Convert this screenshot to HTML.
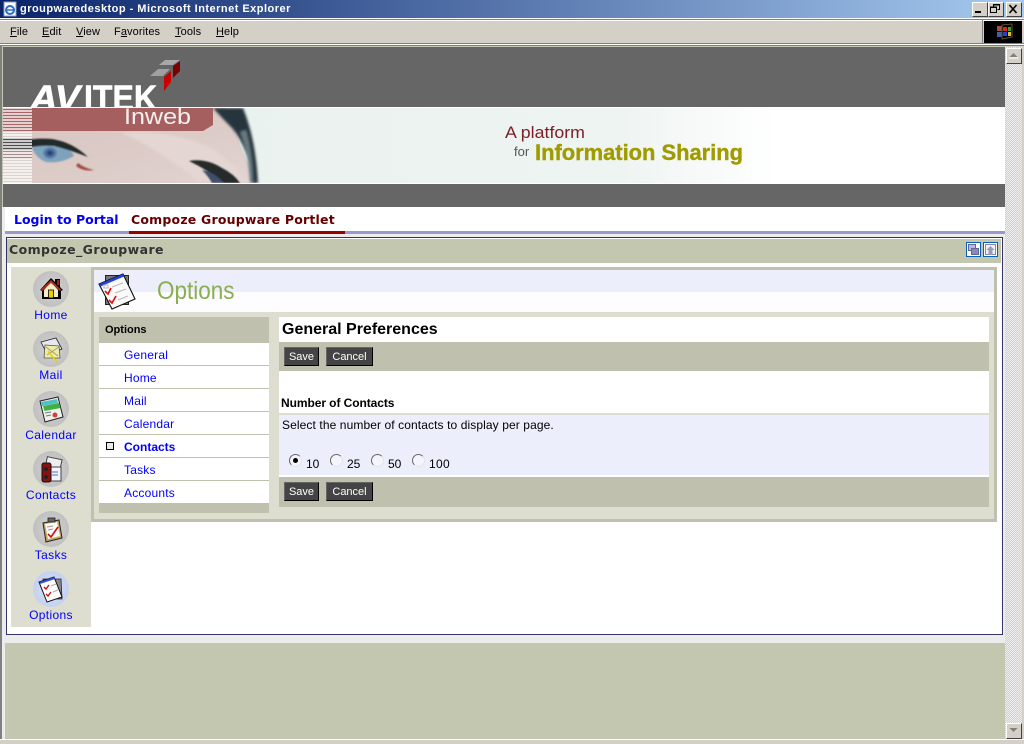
<!DOCTYPE html>
<html>
<head>
<meta charset="utf-8">
<title>groupwaredesktop - Microsoft Internet Explorer</title>
<style>
html,body{margin:0;padding:0;width:1024px;height:744px;overflow:hidden;background:#d4d0c8;font-family:"Liberation Sans",sans-serif}
.a{position:absolute}
.t{position:absolute;white-space:nowrap}
.menu{top:24px;font-size:11px;color:#000;line-height:16px;letter-spacing:.1px}
.menu u{text-decoration:underline}
.nav{font-size:12px;color:#0000ff;width:80px;left:11px;text-align:center;line-height:14px;letter-spacing:.35px}
.side{left:124px;font-size:12px;color:#0000ff;line-height:14px;letter-spacing:.2px}
.sep{left:99px;width:170px;height:1px;background:#bfc0ae}
.btn{position:absolute;background:#444;color:#fff;font-size:11px;height:17px;line-height:18px;text-align:center;border-top:1px solid #666;border-left:1px solid #666;border-right:1px solid #000;border-bottom:1px solid #000;box-sizing:content-box}
.circle{position:absolute;left:33px;width:36px;height:36px;border-radius:50%;background:radial-gradient(circle at 50% 50%,#d4d4d4 0,#c0c0c0 72%,#909090 100%)}
.radio{position:absolute;width:11px;height:11px;border-radius:50%;background:#f4f4fc;border:1px solid;border-color:#666 #e4e4e4 #e4e4e4 #666}
</style>
</head>
<body>
<!-- title bar -->
<div class="a" style="left:0;top:0;width:1024px;height:18px;background:linear-gradient(90deg,#0a246a,#a6caf0)"></div>
<svg class="a" style="left:2px;top:1px" width="16" height="16" viewBox="0 0 16 16"><rect x="2" y="1" width="12" height="14" fill="#fff" stroke="#8898b8"/><circle cx="8" cy="9" r="4" fill="none" stroke="#2a6cc8" stroke-width="2"/><path d="M4 9h8" stroke="#2a6cc8" stroke-width="1.5"/></svg>
<div class="t" style="left:20px;top:1px;font-size:11px;font-weight:bold;color:#fff;line-height:16px;letter-spacing:.48px">groupwaredesktop - Microsoft Internet Explorer</div>
<div class="a" style="left:972px;top:2px;width:14px;height:13px;background:#d4d0c8;border:1px solid;border-color:#fff #404040 #404040 #fff"></div>
<div class="a" style="left:975px;top:11px;width:6px;height:2px;background:#000"></div>
<div class="a" style="left:988px;top:2px;width:14px;height:13px;background:#d4d0c8;border:1px solid;border-color:#fff #404040 #404040 #fff"></div>
<svg class="a" style="left:990px;top:4px" width="11" height="10"><path d="M3.5 2.5V.5h6v5H7.5M.5 3.5h6v5h-6z" fill="none" stroke="#000"/><path d="M3 1h7M0 3h7" stroke="#000"/></svg>
<div class="a" style="left:1006px;top:2px;width:14px;height:13px;background:#d4d0c8;border:1px solid;border-color:#fff #404040 #404040 #fff"></div>
<svg class="a" style="left:1008px;top:4px" width="11" height="10"><path d="M1.5 1l7 8M8.5 1l-7 8" stroke="#000" stroke-width="1.6"/></svg>

<!-- menu -->
<div class="a" style="left:0;top:18px;width:1024px;height:2px;background:#fff"></div>
<div class="a" style="left:0;top:19px;width:1024px;height:1px;background:#808080"></div>
<div class="a" style="left:0;top:20px;width:1024px;height:1px;background:#fff"></div>
<div class="a" style="left:0;top:43px;width:1024px;height:1px;background:#808080"></div>
<div class="a" style="left:0;top:44px;width:1024px;height:1px;background:#fff"></div>
<div class="a" style="left:0;top:45px;width:1024px;height:1px;background:#808080"></div>
<div class="t menu" style="left:10px"><u>F</u>ile</div>
<div class="t menu" style="left:42px"><u>E</u>dit</div>
<div class="t menu" style="left:76px"><u>V</u>iew</div>
<div class="t menu" style="left:114px">F<u>a</u>vorites</div>
<div class="t menu" style="left:175px"><u>T</u>ools</div>
<div class="t menu" style="left:216px"><u>H</u>elp</div>
<div class="a" style="left:982px;top:20px;width:1px;height:23px;background:#808080"></div>
<div class="a" style="left:984px;top:21px;width:38px;height:22px;background:#000"></div>
<svg class="a" style="left:995px;top:23px" width="20" height="18"><rect x="2" y="3" width="5" height="5" fill="#a85040"/><rect x="2" y="9" width="5" height="5" fill="#4060a0"/><rect x="8" y="4" width="4" height="4" fill="#e02020"/><rect x="13" y="4" width="3" height="4" fill="#30a030"/><rect x="8" y="9" width="4" height="4" fill="#2040e0"/><rect x="13" y="9" width="3" height="4" fill="#e0c020"/><path d="M7 2l10-1v13l-10 2z" fill="none" stroke="#605030"/></svg>

<!-- content frame -->
<div class="a" style="left:0;top:46px;width:1005px;height:694px;background:#ececec"></div>
<div class="a" style="left:0;top:46px;width:2px;height:694px;background:#808080"></div>
<div class="a" style="left:2px;top:46px;width:1px;height:161px;background:#c4c7b0"></div>
<div class="a" style="left:2px;top:46px;width:1003px;height:1px;background:#c4c7b0"></div>

<!-- banner: coordinates below are page coordinates -->
<svg class="a" style="left:3px;top:47px" width="1002" height="160" viewBox="3 47 1002 160">
 <defs>
  <linearGradient id="fade" x1="0" x2="1"><stop offset="0" stop-color="#e8f0ee"/><stop offset=".8" stop-color="#eef4f2"/><stop offset="1" stop-color="#fff"/></linearGradient>
  <linearGradient id="skin" x1="0" x2="1" y1="0" y2="1"><stop offset="0" stop-color="#d6c4c0"/><stop offset=".55" stop-color="#dccbc7"/><stop offset="1" stop-color="#e2d4d1"/></linearGradient>
  <radialGradient id="iris"><stop offset="0" stop-color="#1c2c5c"/><stop offset=".3" stop-color="#38588a"/><stop offset="1" stop-color="#8cb0ca"/></radialGradient>
  <clipPath id="bn"><rect x="3" y="108" width="1002" height="75"/></clipPath>
  <filter id="soft" x="-5%" y="-5%" width="110%" height="110%"><feGaussianBlur stdDeviation=".8"/></filter>
  <filter id="soft2" x="-5%" y="-5%" width="110%" height="110%"><feGaussianBlur stdDeviation="1.4"/></filter>
 </defs>
 <rect x="3" y="47" width="1002" height="160" fill="#666"/>
 <text x="30" y="110" font-family="Liberation Sans,sans-serif" font-weight="bold" font-style="italic" font-size="35" fill="#fff" stroke="#fff" stroke-width=".6" textLength="50" lengthAdjust="spacingAndGlyphs">AV</text>
 <text x="84" y="110" font-family="Liberation Sans,sans-serif" font-weight="bold" font-size="35" fill="#fff" stroke="#fff" stroke-width=".6" textLength="73" lengthAdjust="spacingAndGlyphs">ITEK</text>
 <rect x="3" y="107" width="1002" height="77" fill="#fff"/>
 <g clip-path="url(#bn)">
  <rect x="3" y="108" width="772" height="75" fill="url(#fade)"/>
  <path d="M3 108H225L256 183H3z" fill="url(#skin)"/>
  <g filter="url(#soft2)">
   <path d="M213 108H243Q256 140 258 183H251Q250 150 232 128 222 118 213 108z" fill="#28363c"/>
   <path d="M246 130Q253 155 253 183H250Q248 150 240 132z" fill="#667a80"/>
   <path d="M120 132Q180 130 215 150 235 165 248 183H200Q160 150 120 132z" fill="#e4d6d2"/>
  </g>
  <g filter="url(#soft)">
   <path d="M32 148Q50 140 62 146 72 150 74 156 60 164 46 162 36 158 32 148z" fill="#7fa2bc"/>
   <ellipse cx="50" cy="153" rx="9" ry="7.500" fill="url(#iris)"/>
   <path d="M3 146Q26 137 52 139 72 142 88 157 70 150 54 146 30 144 3 156z" fill="#23292c"/>
   <path d="M78 163Q84 168 94 170 84 172 76 166z" fill="#a04c42"/>
   <path d="M189 161Q206 158 222 168 234 174 240 183H224Q208 170 189 161z" fill="#25292c"/>
   <path d="M202 170Q214 172 224 183H212Q208 176 202 170z" fill="#40506c"/>
  </g>
  <path d="M32 108H213V125L203 131H32z" fill="#a55f5f"/>
  <path d="M3 108h29v75H3z" fill="#f8f4f2"/>
  <path d="M3 109.500h29M3 112.500h29M3 115.500h29M3 118.500h29M3 121.500h29M3 124.500h29M3 127.500h29M3 130.500h29" stroke="#a66668" stroke-width="1.400"/>
  <path d="M3 133.500h29M3 136.500h29" stroke="#d8d0d0" stroke-width="1.200"/>
  <path d="M3 139.500h29M3 142.500h29M3 145.500h29M3 148.500h29" stroke="#4c4e52" stroke-width="1.400"/>
  <path d="M3 151.500h29M3 154.500h29M3 157.500h29" stroke="#a48c8c" stroke-width="1.300"/>
  <path d="M3 160.500h29M3 163.500h29M3 166.500h29M3 169.500h29M3 172.500h29M3 175.500h29M3 178.500h29M3 181.500h29" stroke="#dcd2d0" stroke-width="1.300"/>
 </g>
 <!-- logo cubes -->
 <path d="M165 60H180L173 65H159z" fill="#a8a8a8"/>
 <path d="M158 69H170L163 76H150z" fill="#a0a0a0"/>
 <path d="M173 66L180 61V71L173 78z" fill="#7c0000"/>
 <path d="M164 77L171 71V82L164 91z" fill="#c80000"/>
 <text x="124" y="124" font-family="Liberation Sans,sans-serif" font-size="22" fill="#f6f0f0" textLength="67" lengthAdjust="spacingAndGlyphs">Inweb</text>
 <text x="505" y="138" font-family="Liberation Sans,sans-serif" font-size="17" fill="#7c2028" textLength="80" lengthAdjust="spacingAndGlyphs">A platform</text>
 <text x="514" y="156" font-family="Liberation Sans,sans-serif" font-size="13" fill="#555">for</text>
 <text x="535" y="160" font-family="Liberation Sans,sans-serif" font-weight="bold" font-size="22" fill="#a09c00" stroke="#a09c00" stroke-width=".4" textLength="208" lengthAdjust="spacingAndGlyphs">Information Sharing</text>
</svg>

<!-- tabs -->
<div class="a" style="left:2px;top:207px;width:1003px;height:24px;background:#fff"></div>
<div class="a" style="left:2px;top:231px;width:127px;height:3px;background:#9999cc"></div>
<div class="a" style="left:129px;top:231px;width:216px;height:3px;background:#990000"></div>
<div class="a" style="left:345px;top:231px;width:660px;height:3px;background:#9999cc"></div>
<div class="t" style="left:14px;top:212px;font-family:'DejaVu Sans',sans-serif;font-size:12.500px;font-weight:bold;color:#0000ee;line-height:16px">Login to Portal</div>
<div class="t" style="left:131px;top:212px;font-family:'DejaVu Sans',sans-serif;font-size:12.500px;font-weight:bold;color:#660000;line-height:16px;letter-spacing:.2px">Compoze Groupware Portlet</div>

<!-- portlet -->
<div class="a" style="left:6px;top:237px;width:995px;height:396px;background:#fff;border:1px solid #333366"></div>
<div class="a" style="left:7px;top:239px;width:994px;height:24px;background:#c4c7b0"></div>
<div class="t" style="left:9px;top:242px;font-family:'DejaVu Sans',sans-serif;font-size:12.500px;font-weight:bold;color:#333;line-height:16px;letter-spacing:.42px">Compoze_Groupware</div>
<svg class="a" style="left:966px;top:242px" width="33" height="16"><rect x=".5" y=".5" width="14" height="14" fill="#fff" stroke="#0a62b8"/><rect x="2.500" y="2.500" width="7" height="6" fill="#b8b8dc" stroke="#666699"/><rect x="5.500" y="6.500" width="7" height="6" fill="#8888bb" stroke="#666699"/><rect x="17.500" y=".5" width="14" height="14" fill="#fff" stroke="#0a62b8"/><rect x="19.500" y="2.500" width="10" height="10" fill="#f0f0f8" stroke="#8888aa"/><path d="M24.500 4l4 4h-2v5h-4V8h-2z" fill="#9999bb"/></svg>

<!-- left nav -->
<div class="a" style="left:11px;top:267px;width:80px;height:360px;background:#dddecf"></div>
<div class="circle" style="top:271px"></div>
<div class="circle" style="top:331px"></div>
<div class="circle" style="top:391px"></div>
<div class="circle" style="top:451px"></div>
<div class="circle" style="top:511px"></div>
<div class="circle" style="top:571px;background:radial-gradient(circle,#dce4fa 0,#c4d0f0 72%,#969cbc 100%)"></div>
<svg class="a" style="left:33px;top:271px" width="36" height="36"><path d="M7 19L18 7l4 4V8h5v8l3 3-2 1v8H9v-8z" fill="#000"/><rect x="24" y="9" width="2.500" height="5" fill="#a02020"/><path d="M11 19l7-8 7 8v7H11z" fill="#f6eccc"/><path d="M18 9L7.500 19l2 .8L18 12l8.500 7.800 2-.8z" fill="#b03020"/><rect x="15.500" y="19" width="5" height="8" fill="#e8d000" stroke="#000" stroke-width=".8"/></svg>
<svg class="a" style="left:33px;top:331px" width="36" height="36"><path d="M8 11l15-4 6 11-15 5z" fill="#e8e8f0" stroke="#222" stroke-width=".8"/><path d="M12 14l14 1 1 12-16 0z" fill="#f0eca0" stroke="#555" stroke-width=".8"/><path d="M13 16l12 9M26 16l-12 8" stroke="#999"/><path d="M15 20l9 11" stroke="#e8d000" stroke-width="1.500"/></svg>
<svg class="a" style="left:33px;top:391px" width="36" height="36"><path d="M7 10l18-4 5 20-18 5z" fill="#eef0ea" stroke="#222"/><path d="M8 11l16-3 1 4-16 3z" fill="#50c0c8"/><path d="M10 15l16-3 1.500 5-16 3z" fill="#40b040"/><circle cx="22" cy="24" r="2.500" fill="#d04040"/><path d="M12 22l6-1M13 25l5-1" stroke="#777"/></svg>
<svg class="a" style="left:33px;top:451px" width="36" height="36"><rect x="13" y="7" width="15" height="13" fill="#eee" stroke="#444" transform="rotate(12 20 13)"/><rect x="15" y="16" width="13" height="14" fill="#f4f4ff" stroke="#444"/><rect x="9" y="12" width="9" height="19" rx="2" fill="#8a1010" stroke="#111"/><circle cx="13" cy="18" r="2" fill="#222"/><circle cx="13" cy="26" r="2" fill="#222"/><path d="M19 21h6M19 24h6" stroke="#5070c0"/></svg>
<svg class="a" style="left:33px;top:511px" width="36" height="36"><path d="M10 12l16-3 3 18-16 4z" fill="#c8a860" stroke="#222"/><path d="M12 13l12-2 3 14-12 3z" fill="#fafafa"/><rect x="15" y="7" width="7" height="4" fill="#666" stroke="#222" stroke-width=".8"/><path d="M15 23l3 3 7-10" fill="none" stroke="#cc1010" stroke-width="1.600"/><path d="M14 16l6-1M15 19l5-1" stroke="#999"/></svg>
<svg class="a" style="left:33px;top:571px" width="36" height="36"><path d="M10 8h18l1 20H14z" fill="#888" stroke="#222" stroke-width=".8"/><path d="M6 11l15-5 8 20-15 5z" fill="#fff" stroke="#111"/><path d="M6.500 11l14.500-5 1 2-15 5z" fill="#3050d8"/><path d="M11 16l2 2 3-4M13 23l2 2 3-4" fill="none" stroke="#d01010" stroke-width="1.400"/><path d="M18 15l5-2M20 21l5-2" stroke="#aaa"/></svg>
<div class="t nav" style="top:308px">Home</div>
<div class="t nav" style="top:368px">Mail</div>
<div class="t nav" style="top:428px">Calendar</div>
<div class="t nav" style="top:488px">Contacts</div>
<div class="t nav" style="top:548px">Tasks</div>
<div class="t nav" style="top:608px">Options</div>

<!-- main panel -->
<div class="a" style="left:91px;top:267px;width:906px;height:254px;background:#dddecf"></div>
<div class="a" style="left:91px;top:267px;width:3px;height:254px;background:#bfc0ae"></div>
<div class="a" style="left:91px;top:267px;width:906px;height:3px;background:#bfc0ae"></div>
<div class="a" style="left:994px;top:267px;width:3px;height:254px;background:#bfc0ae"></div>
<div class="a" style="left:91px;top:519px;width:906px;height:3px;background:#bfc0ae"></div>
<div class="a" style="left:94px;top:270px;width:900px;height:22px;background:#eceefc"></div>
<div class="a" style="left:94px;top:292px;width:900px;height:20px;background:#fdfcfe"></div>
<svg class="a" style="left:97px;top:271px" width="40" height="40"><rect x="8.500" y="4.500" width="23" height="29" fill="#777" stroke="#222"/><path d="M2 13L26 3l12 25-23 10z" fill="#fafafa" stroke="#111" stroke-width="1.100"/><path d="M2.500 13L26 3l1 2.500-23.500 10z" fill="#2040e0"/><path d="M8 20l3 3 3-6M12 29l3 3 4-7" fill="none" stroke="#e01010" stroke-width="1.700"/><path d="M15 16l11-4M18 22l11-4M21 29l10-4" stroke="#b8b8b8"/><rect x="7" y="14" width="4" height="3" fill="none" stroke="#bbb"/></svg>
<div class="t" style="left:157px;top:276px;font-size:25px;color:#8aae50;line-height:30px;transform:scaleX(.9);transform-origin:0 0">Options</div>

<!-- side menu -->
<div class="a" style="left:99px;top:317px;width:170px;height:196px;background:#fff"></div>
<div class="a" style="left:99px;top:317px;width:170px;height:26px;background:#bfc0ae"></div>
<div class="t" style="left:105px;top:323px;font-size:11px;font-weight:bold;color:#000;line-height:14px">Options</div>
<div class="a sep" style="top:365px"></div>
<div class="a sep" style="top:388px"></div>
<div class="a sep" style="top:411px"></div>
<div class="a sep" style="top:434px"></div>
<div class="a sep" style="top:457px"></div>
<div class="a sep" style="top:480px"></div>
<div class="a" style="left:99px;top:503px;width:170px;height:10px;background:#bfc0ae"></div>
<div class="t side" style="top:348px">General</div>
<div class="t side" style="top:371px">Home</div>
<div class="t side" style="top:394px">Mail</div>
<div class="t side" style="top:417px">Calendar</div>
<div class="t side" style="top:440px;font-weight:bold;letter-spacing:0">Contacts</div>
<div class="t side" style="top:463px">Tasks</div>
<div class="t side" style="top:486px">Accounts</div>
<div class="a" style="left:106px;top:442px;width:6px;height:6px;background:#e8e8e8;border:1px solid #000"></div>

<!-- right content -->
<div class="a" style="left:279px;top:317px;width:710px;height:190px;background:#fff"></div>
<div class="t" style="left:282px;top:320px;font-size:16px;font-weight:bold;color:#000;line-height:20px">General Preferences</div>
<div class="a" style="left:279px;top:342px;width:710px;height:29px;background:#bfc0ae"></div>
<div class="btn" style="left:284px;top:347px;width:33px">Save</div>
<div class="btn" style="left:326px;top:347px;width:45px">Cancel</div>
<div class="t" style="left:281px;top:396px;font-size:12px;font-weight:bold;color:#000;line-height:14px;letter-spacing:-.07px">Number of Contacts</div>
<div class="a" style="left:279px;top:413px;width:710px;height:2px;background:#dddecf"></div>
<div class="a" style="left:279px;top:415px;width:710px;height:60px;background:#eceefc"></div>
<div class="t" style="left:282px;top:418px;font-size:12px;color:#000;line-height:14px;letter-spacing:.1px">Select the number of contacts to display per page.</div>
<div class="radio" style="left:289px;top:454px"></div>
<div class="a" style="left:293px;top:458px;width:5px;height:5px;border-radius:50%;background:#000"></div>
<div class="radio" style="left:330px;top:454px"></div>
<div class="radio" style="left:371px;top:454px"></div>
<div class="radio" style="left:412px;top:454px"></div>
<div class="t" style="left:306px;top:457px;font-size:12px;line-height:14px">10</div>
<div class="t" style="left:347px;top:457px;font-size:12px;line-height:14px">25</div>
<div class="t" style="left:388px;top:457px;font-size:12px;line-height:14px">50</div>
<div class="t" style="left:429px;top:457px;font-size:12px;line-height:14px;letter-spacing:.3px">100</div>
<div class="a" style="left:279px;top:475px;width:710px;height:2px;background:#fff"></div>
<div class="a" style="left:279px;top:477px;width:710px;height:30px;background:#bfc0ae"></div>
<div class="btn" style="left:284px;top:482px;width:33px">Save</div>
<div class="btn" style="left:326px;top:482px;width:45px">Cancel</div>

<!-- footer -->
<div class="a" style="left:5px;top:643px;width:1000px;height:97px;background:#c4c7b0"></div>
<div class="a" style="left:2px;top:207px;width:3px;height:533px;background:#ececec"></div>

<!-- scrollbar -->
<div class="a" style="left:1005px;top:47px;width:17px;height:693px;background-color:#eee;background-image:linear-gradient(45deg,#d4d0c8 25%,transparent 25%,transparent 75%,#d4d0c8 75%),linear-gradient(45deg,#d4d0c8 25%,transparent 25%,transparent 75%,#d4d0c8 75%);background-size:2px 2px;background-position:0 0,1px 1px"></div>
<div class="a" style="left:1006px;top:48px;width:14px;height:14px;background:#d4d0c8;border:1px solid;border-color:#fff #404040 #404040 #fff"></div>
<svg class="a" style="left:1008px;top:52px" width="11" height="7"><path d="M5.500 1l4 4h-8z" fill="#808080"/><path d="M1 6h9" stroke="#fff"/></svg>
<div class="a" style="left:1006px;top:723px;width:14px;height:14px;background:#d4d0c8;border:1px solid;border-color:#fff #404040 #404040 #fff"></div>
<svg class="a" style="left:1008px;top:727px" width="11" height="7"><path d="M1.500 1h8l-4 4z" fill="#808080"/></svg>
<div class="a" style="left:1022px;top:46px;width:2px;height:694px;background:#d4d0c8"></div>
<div class="a" style="left:0;top:739px;width:1024px;height:1px;background:#fff"></div>
<div class="a" style="left:0;top:740px;width:1024px;height:4px;background:#d4d0c8"></div>
</body>
</html>
